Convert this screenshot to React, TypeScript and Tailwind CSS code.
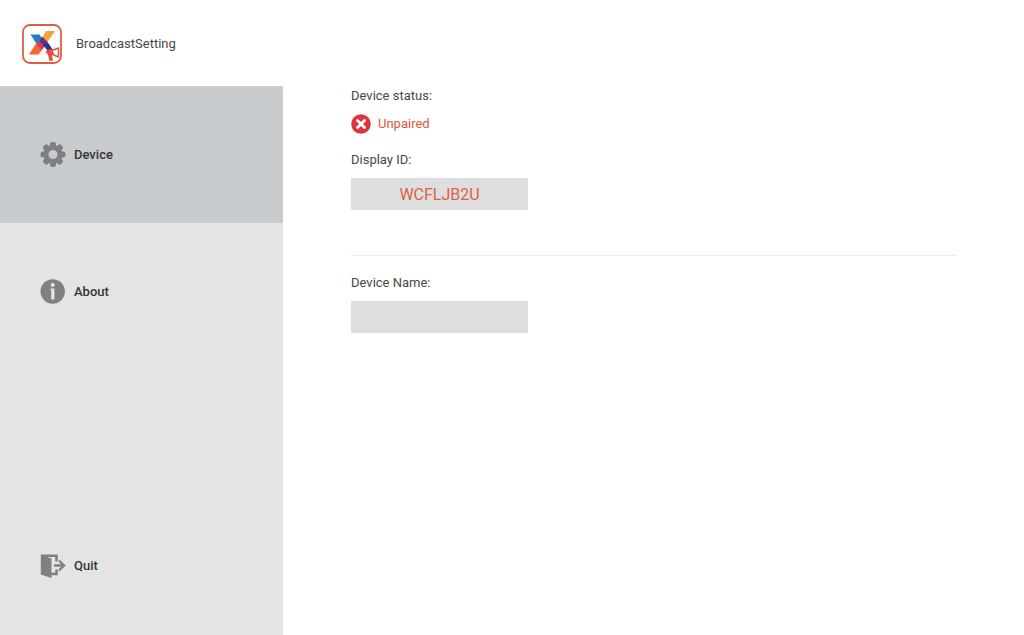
import type { ReactNode } from 'react';

const TOOTH_ANGLES = [0, 45, 90, 135, 180, 225, 270, 315];

function Logo() {
  return (
    <svg viewBox="0 0 40 40" className="h-10 w-10 shrink-0" aria-hidden="true">
      <rect x="1" y="1" width="38" height="38" rx="7" fill="#fff" stroke="#dc5f40" strokeWidth="1.8" />
      <path d="M8.500 10.500h9l4 6-5.500 5.500z" fill="#1c80c4" />
      <path d="M24 7h9l-7.500 11-6-3z" fill="#f2a33a" />
      <path d="M20 12.500l5.500 5.500-4 6-5.500-4z" fill="#6b2c83" />
      <path d="M14 19.500l8 4-5.500 7H7z" fill="#ef6b2d" />
      <path d="M16.500 16.500l5.500 5.500-2.500 4-5-6z" fill="#d93a63" />
      <path d="M21 21l4.500-3 5.500 8-4 2.500z" fill="#2d358c" />
      <path d="M23.500 27.500l5.500-3 3.500 6-2.500 1 1 5-3.500.5-1.500-6z" fill="#e54e3d" />
      <path d="M30 26.500l6.500-2.500v9l-5-2" fill="none" stroke="#e54e3d" strokeWidth="1.400" />
    </svg>
  );
}

function GearIcon() {
  return (
    <svg viewBox="0 0 26 26" className="h-[26px] w-[26px] shrink-0" aria-hidden="true">
      <circle cx="13" cy="12.500" r="7" fill="none" stroke="#7f8083" strokeWidth="5" />
      {TOOTH_ANGLES.map((angle) => (
        <rect
          key={angle}
          x="10"
          y="0"
          width="6"
          height="6"
          rx="2.200"
          fill="#7f8083"
          transform={`rotate(${angle} 13 12.5)`}
        />
      ))}
    </svg>
  );
}

function InfoIcon() {
  return (
    <svg viewBox="0 0 26 26" className="h-[26px] w-[26px] shrink-0" aria-hidden="true">
      <circle cx="12.700" cy="12.500" r="12.200" fill="#7f8083" />
      <circle cx="12.700" cy="6" r="2" fill="#e4e4e4" />
      <path d="M10.500 9.500h3.900v11h-3.200v-9.500h-.7z" fill="#e4e4e4" />
    </svg>
  );
}

function QuitIcon() {
  return (
    <svg viewBox="0 0 26 26" className="h-[26px] w-[26px] shrink-0" aria-hidden="true">
      <path d="M.8 1.800L11.500 5.500v19.500L.8 21.500z" fill="#7f8083" />
      <path d="M1 2.700h15.500V8.500M16.500 16.500v4.500H11" fill="none" stroke="#7f8083" strokeWidth="2.600" />
      <path d="M14 12.500h10M19 7.500l5 5-5 5" fill="none" stroke="#7f8083" strokeWidth="2.400" />
    </svg>
  );
}

function ErrorIcon() {
  return (
    <svg viewBox="0 0 20 20" className="h-5 w-5 shrink-0" aria-hidden="true">
      <circle cx="10" cy="10" r="9.800" fill="#dc373c" />
      <path d="M6.500 6.500l7 7M13.500 6.500l-7 7" stroke="#fff" strokeWidth="2.800" strokeLinecap="round" />
    </svg>
  );
}

interface NavItemProps {
  readonly icon: ReactNode;
  readonly label: string;
  readonly className?: string;
}

function NavItem({ icon, label, className = '' }: NavItemProps) {
  return (
    <button
      type="button"
      className={`flex items-center gap-2 pl-10 text-left font-medium text-[#353535] ${className}`}
    >
      {icon}
      {label}
    </button>
  );
}

export default function App() {
  return (
    <div className="flex min-h-screen flex-col bg-white font-[Roboto,sans-serif] text-[13px] leading-5 text-[#484848]">
      <header className="flex items-center gap-[14px] px-[22px] pt-6 pb-[22px]">
        <Logo />
        <h1>BroadcastSetting</h1>
      </header>

      <div className="flex flex-1">
        <nav className="grid w-[283px] shrink-0 grid-rows-4 bg-[#e4e4e4]">
          <NavItem icon={<GearIcon />} label="Device" className="bg-[#c9cccf]" />
          <NavItem icon={<InfoIcon />} label="About" />
          <NavItem icon={<QuitIcon />} label="Quit" className="row-start-4" />
        </nav>

        <main className="flex flex-1 flex-col items-start pr-[67px] pl-[68px]">
          <h2>Device status:</h2>
          <p className="mt-2 flex items-center gap-[7px] text-[#d9583e]">
            <ErrorIcon />
            Unpaired
          </p>

          <label htmlFor="display-id" className="mt-4">
            Display ID:
          </label>
          <input
            id="display-id"
            type="text"
            readOnly
            value="WCFLJB2U"
            className="mt-2 h-8 w-[177px] bg-[#dedede] text-center text-base text-[#df5f48] outline-none"
          />

          <hr className="mt-[45px] w-full border-[#ececec]" />

          <label htmlFor="device-name" className="mt-[17px]">
            Device Name:
          </label>
          <input
            id="device-name"
            type="text"
            className="mt-2 h-8 w-[177px] bg-[#dedede] px-2 outline-none"
          />
        </main>
      </div>
    </div>
  );
}
